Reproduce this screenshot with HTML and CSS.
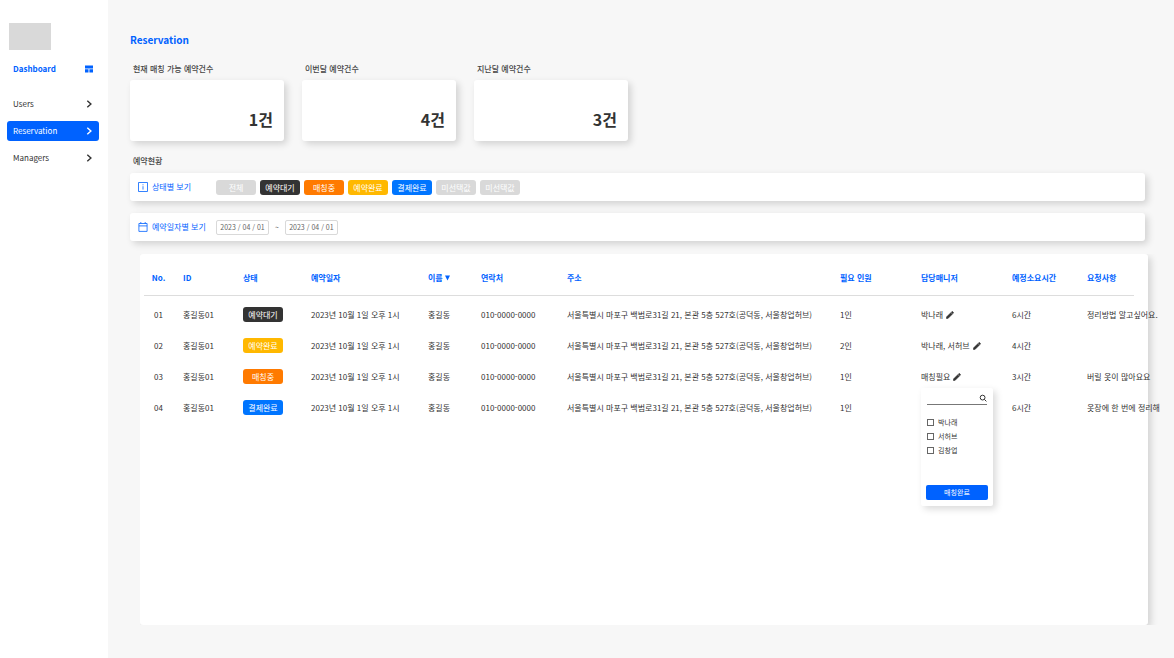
FILE: index.html
```html
<!DOCTYPE html>
<html lang="ko">
<head>
<meta charset="utf-8">
<title>Reservation</title>
<link rel="stylesheet" href="styles.css">
</head>
<body>
<svg class="defs" aria-hidden="true">
  <symbol id="chevron" viewBox="0 0 8 8"><path d="M2.3.8 5.9 4 2.3 7.2" fill="none" stroke="currentColor" stroke-width="1.4"/></symbol>
  <symbol id="pencil" viewBox="2 2 20 20"><path d="M3 17.25V21h3.75L17.81 9.94l-3.75-3.75L3 17.25zM20.71 7.04a1 1 0 0 0 0-1.41l-2.34-2.34a1 1 0 0 0-1.41 0l-1.83 1.83 3.75 3.75 1.83-1.83z" fill="currentColor" stroke="currentColor" stroke-width="1.4"/></symbol>
</svg>
<div class="app">
  <aside class="sidebar">
    <div class="logo"></div>
    <nav class="nav">
      <a class="nav-item nav-home" href="#">Dashboard
        <svg class="icon" viewBox="0 0 8 8"><path d="M0 .5h8v3H0zM0 4.3h3.5v3.2H0zM4.4 4.3H8v3.2H4.4z" fill="currentColor"/></svg></a>
      <a class="nav-item" href="#">Users<svg class="icon"><use href="#chevron"/></svg></a>
      <a class="nav-item active" href="#">Reservation<svg class="icon"><use href="#chevron"/></svg></a>
      <a class="nav-item" href="#">Managers<svg class="icon"><use href="#chevron"/></svg></a>
    </nav>
  </aside>
  <main class="main">
    <h1 class="title">Reservation</h1>
    <section class="stats">
      <div class="stat"><h2 class="label">현재 매칭 가능 예약건수</h2><div class="card">1건</div></div>
      <div class="stat"><h2 class="label">이번달 예약건수</h2><div class="card">4건</div></div>
      <div class="stat"><h2 class="label">지난달 예약건수</h2><div class="card">3건</div></div>
    </section>
    <h2 class="label label-status">예약현황</h2>
    <section class="bar">
      <div class="bar-name">
        <svg class="bar-icon" viewBox="0 0 10 10" fill="none" stroke="currentColor" stroke-width=".8"><path d="M.5.5h9v9h-9zM5 4.2v3.4M5 2.3v1"/></svg>
        상태별 보기
      </div>
      <div class="chips">
        <button class="chip">전체</button>
        <button class="chip dark">예약대기</button>
        <button class="chip orange">매칭중</button>
        <button class="chip yellow">예약완료</button>
        <button class="chip blue">결제완료</button>
        <button class="chip">미선택값</button>
        <button class="chip">미선택값</button>
      </div>
    </section>
    <section class="bar">
      <div class="bar-name">
        <svg class="bar-icon" viewBox="0 0 10 10" fill="none" stroke="currentColor" stroke-width=".8"><path d="M.9 1.5h8.2v7.9H.9zM.9 3.9h8.2M2.8 0v1.5M7.2 0v1.5"/></svg>
        예약일자별 보기
      </div>
      <div class="dates">
        <input class="date" type="text" aria-label="시작일" value="2023 / 04 / 01">
        <span>~</span>
        <input class="date" type="text" aria-label="종료일" value="2023 / 04 / 01">
      </div>
    </section>
    <div class="list">
      <section class="panel">
        <table class="table">
          <colgroup><col class="c-no"><col class="c-id"><col class="c-state"><col class="c-date"><col class="c-name"><col class="c-tel"><col class="c-addr"><col class="c-people"><col class="c-manager"><col class="c-hours"><col></colgroup>
          <thead>
            <tr><th class="no">No.</th><th>ID</th><th>상태</th><th>예약일자</th><th>이름<svg class="sort" viewBox="0 0 6 6"><path d="M0 0h6L3 6z" fill="currentColor"/></svg></th><th>연락처</th><th>주소</th><th>필요 인원</th><th>담당매니저</th><th>예정소요시간</th><th>요청사항</th></tr>
          </thead>
          <tbody>
            <tr><td class="no">01</td><td>홍길동01</td><td><span class="chip dark">예약대기</span></td><td>2023년 10월 1일 오후 1시</td><td>홍길동</td><td>010-0000-0000</td><td>서울특별시 마포구 백범로31길 21, 본관 5층 527호(공덕동, 서울창업허브)</td><td>1인</td><td>박나래<button class="edit" aria-label="수정"><svg class="icon"><use href="#pencil"/></svg></button></td><td>6시간</td><td>정리방법 알고싶어요.</td></tr>
            <tr><td class="no">02</td><td>홍길동01</td><td><span class="chip yellow">예약완료</span></td><td>2023년 10월 1일 오후 1시</td><td>홍길동</td><td>010-0000-0000</td><td>서울특별시 마포구 백범로31길 21, 본관 5층 527호(공덕동, 서울창업허브)</td><td>2인</td><td>박나래, 서허브<button class="edit" aria-label="수정"><svg class="icon"><use href="#pencil"/></svg></button></td><td>4시간</td><td></td></tr>
            <tr><td class="no">03</td><td>홍길동01</td><td><span class="chip orange">매칭중</span></td><td>2023년 10월 1일 오후 1시</td><td>홍길동</td><td>010-0000-0000</td><td>서울특별시 마포구 백범로31길 21, 본관 5층 527호(공덕동, 서울창업허브)</td><td>1인</td><td class="anchor">매칭필요<button class="edit" aria-label="수정"><svg class="icon"><use href="#pencil"/></svg></button>
              <div class="popover">
                <div class="search">
                  <input class="search-input" type="text" aria-label="매니저 검색">
                  <svg class="icon" viewBox="0 0 8 8" fill="none" stroke="currentColor" stroke-width="1"><circle cx="3.6" cy="3.6" r="2.4"/><path d="M5.3 5.3 7.4 7.4"/></svg>
                </div>
                <div class="options">
                  <label class="option"><input class="check" type="checkbox">박나래</label>
                  <label class="option"><input class="check" type="checkbox">서허브</label>
                  <label class="option"><input class="check" type="checkbox">김창업</label>
                </div>
                <button class="done">매칭완료</button>
              </div></td><td>3시간</td><td>버릴 옷이 많아요요</td></tr>
            <tr><td class="no">04</td><td>홍길동01</td><td><span class="chip blue">결제완료</span></td><td>2023년 10월 1일 오후 1시</td><td>홍길동</td><td>010-0000-0000</td><td>서울특별시 마포구 백범로31길 21, 본관 5층 527호(공덕동, 서울창업허브)</td><td>1인</td><td></td><td>6시간</td><td>옷장에 한 번에 정리해</td></tr>
          </tbody>
        </table>
      </section>
    </div>
  </main>
</div>
</body>
</html>
```
FILE: styles.css
```css
:root {
  --primary: #0062ff;
  --ink: #333;
  --shadow: 3px 3px 7px rgba(0, 0, 0, .15);
}
* { box-sizing: border-box; }
body {
  margin: 0;
  background: #f7f7f7;
  color: var(--ink);
  font: 8px/12px "Noto Sans CJK KR", sans-serif;
}
button, input { font: inherit; color: inherit; margin: 0; padding: 0; border: 0; }
button { cursor: pointer; }
h1, h2 { margin: 0; }
.defs { position: absolute; width: 0; height: 0; }
.icon { display: block; width: 8px; height: 8px; flex: none; }

.app { display: flex; min-height: 100vh; }
.sidebar { width: 108px; flex: none; background: #fff; padding: 23px 9px 0 7px; }
.logo { width: 42px; height: 27px; margin-left: 2px; background: #d9d9d9; }
.nav { display: flex; flex-direction: column; gap: 7px; margin-top: 9px; }
.nav-item {
  display: flex;
  align-items: center;
  justify-content: space-between;
  height: 20px;
  padding: 0 6px;
  border-radius: 3px;
  color: inherit;
  text-decoration: none;
}
.nav-home { margin-bottom: 8px; color: var(--primary); font-weight: 700; }
.nav-item.active { background: var(--primary); color: #fff; }

.main { flex: 1; min-width: 0; display: flex; flex-direction: column; padding: 34px 0 33px 22px; }
.title { font-size: 10px; line-height: 12px; color: var(--primary); }
.stats { display: flex; gap: 18px; margin-top: 17px; }
.stat { width: 154px; }
.label { font-size: 8px; line-height: 12px; font-weight: 500; padding-left: 3px; color: #444; }
.label-status { margin-top: 14px; }
.card {
  display: flex;
  align-items: flex-end;
  justify-content: flex-end;
  height: 61px;
  margin-top: 5px;
  padding: 0 11px 10px;
  border-radius: 3px;
  background: #fff;
  box-shadow: var(--shadow);
  color: var(--ink);
  font-size: 16px;
  line-height: 24px;
  font-weight: 700;
}
.bar {
  display: flex;
  align-items: center;
  height: 28px;
  margin: 6px 29px 0 0;
  padding: 0 8px;
  border-radius: 3px;
  background: #fff;
  box-shadow: var(--shadow);
}
.bar + .bar { margin-top: 12px; }
.bar-name { display: flex; align-items: center; gap: 4px; width: 78px; color: var(--primary); }
.bar-icon { width: 10px; height: 10px; }
.chips, .dates { display: flex; gap: 4px; }
.chip {
  display: block;
  width: 40px;
  height: 15px;
  border-radius: 3px;
  background: #d9d9d9;
  color: #fff;
  line-height: 15px;
  text-align: center;
}
.dark { background: #333; }
.orange { background: #ff7a00; }
.yellow { background: #ffb800; }
.blue { background: #0075ff; }
.dates { gap: 6px; color: #666; font-size: 7px; line-height: 15px; }
.date {
  width: 53px;
  height: 15px;
  border: 1px solid #d9d9d9;
  border-radius: 2px;
  background: #fff;
  text-align: center;
}

.list { flex: 1; display: flex; margin: 13px 0 0 10px; padding-right: 26px; overflow: hidden; }
.panel {
  flex: 1;
  min-width: 0;
  padding: 6px 14px 0 4px;
  border-radius: 3px;
  background: #fff;
  box-shadow: var(--shadow);
}
.table { width: 100%; table-layout: fixed; border-collapse: separate; border-spacing: 0; white-space: nowrap; }
.c-no { width: 31px; }
.c-id { width: 60px; }
.c-state { width: 68px; }
.c-date { width: 117px; }
.c-name { width: 53px; }
.c-tel { width: 86px; }
.c-addr { width: 273px; }
.c-people { width: 81px; }
.c-manager { width: 91px; }
.c-hours { width: 75px; }
th, td { padding: 0 0 0 8px; text-align: left; }
th { height: 36px; border-bottom: 1px solid #ddd; color: var(--primary); font-weight: 700; }
td { height: 31px; }
.no { padding: 0 2px 0 0; text-align: center; }
tbody::before { content: ""; display: block; height: 3px; }
.sort { width: 5px; height: 6px; margin-left: 2px; }
.edit { margin-left: 3px; background: none; vertical-align: middle; }

.anchor { position: relative; }
.popover {
  position: absolute;
  top: 27px;
  left: 8px;
  z-index: 1;
  width: 72px;
  height: 118px;
  display: flex;
  flex-direction: column;
  padding: 4px 5px 6px;
  border-radius: 2px;
  background: #fff;
  box-shadow: var(--shadow);
  font-size: 7px;
}
.search { display: flex; align-items: center; height: 13px; margin: 0 1px; border-bottom: 1px solid #777; }
.search-input { flex: 1; min-width: 0; height: 12px; background: none; outline: 0; }
.options { display: flex; flex-direction: column; gap: 2px; margin: 11px 1px auto; }
.option { display: flex; align-items: center; gap: 4px; }
.check { appearance: none; width: 7px; height: 7px; border: 1px solid #666; }
.done { height: 15px; border-radius: 2px; background: var(--primary); color: #fff; line-height: 15px; }
```
